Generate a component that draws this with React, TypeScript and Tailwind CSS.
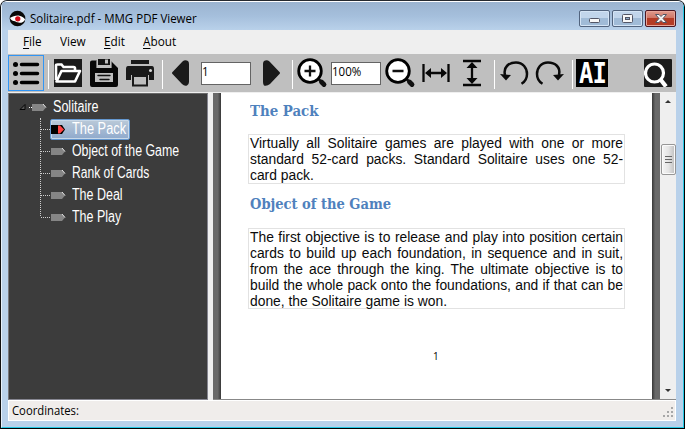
import type { ReactNode } from "react";

const UI = "font-['Open_Sans','Noto_Sans',sans-serif]";

function Glyph({ box, className, children }: { box: string; className: string; children: ReactNode }) {
  return (
    <svg viewBox={box} className={`h-[38px] shrink-0 ${className}`} fill="none" stroke="none">
      {children}
    </svg>
  );
}

function Separator() {
  return <div className="mt-[6px] h-[29px] w-px shrink-0 bg-white" />;
}

function Field({ value }: { value: string }) {
  return (
    <div className="mt-2 h-[23px] w-[50px] shrink-0 border border-[#646464] bg-white text-[12px] leading-[18px] text-black">
      <span className="inline-block origin-left scale-x-[.96]">{value}</span>
    </div>
  );
}

function TitleBar() {
  return (
    <div className="flex h-[28px] shrink-0 bg-linear-to-b from-[#9bb4d0] via-[#a5bfdc] to-[#b9d1ea] pl-[7px]">
      <svg viewBox="0 0 18 18" className="mt-[8px] size-[17px]">
        <circle cx="9" cy="9" r="8.3" fill="#080808" />
        <path d="M1 8.500C4 7 7 5.500 11 6C14.500 6.500 16.500 9 17 10C15.500 14 10 14.500 6.500 12Q3 12 1 8.500Z" fill="#fff" />
        <circle cx="9.300" cy="9.300" r="2.800" fill="#d10b18" />
      </svg>
      <div className="mt-[8px] ml-[4px] w-[200px] text-[12px] leading-[18px] whitespace-nowrap text-black">
        <span className="inline-block origin-left scale-x-[.958]">Solitaire.pdf - MMG PDF Viewer</span>
      </div>
      <div className="mt-[8px] mr-[7px] ml-auto flex gap-[2px]">
        <div className="h-[17px] w-[31px] rounded-[2px] border border-[#52647e] bg-linear-to-b from-[#c1d5eb] from-50% to-[#a0bbd7] to-50% shadow-[inset_0_0_0_1px_#d4e4f5]">
          <svg viewBox="0 0 29 15" className="h-[15px] w-[29px]"><rect x="9.500" y="7.500" width="10" height="4" rx="1" fill="#f8f8f8" stroke="#535666" /></svg>
        </div>
        <div className="h-[17px] w-[31px] rounded-[2px] border border-[#52647e] bg-linear-to-b from-[#c1d5eb] from-50% to-[#a0bbd7] to-50% shadow-[inset_0_0_0_1px_#d4e4f5]">
          <svg viewBox="0 0 29 15" className="h-[15px] w-[29px]"><rect x="9.500" y="3.500" width="10" height="8" rx="1" fill="#f8f8f8" stroke="#535666" /><rect x="12.500" y="6.500" width="4" height="2" fill="#8fabc9" stroke="#535666" /></svg>
        </div>
        <div className="h-[17px] w-[31px] rounded-[2px] border border-[#4b1722] bg-linear-to-b from-[#df9a8d] from-0% via-[#cf7464] via-49% to-[#b43c26] to-50% shadow-[inset_0_0_0_1px_#e8a69a]">
          <svg viewBox="0 0 29 15" className="h-[15px] w-[29px]"><path d="M9.500 3.500H13L15 5.500L17 3.500H20.500L17 7.500L20.500 11.500H17L15 9.500L13 11.500H9.500L13 7.500Z" fill="#f3f3f3" stroke="#525666" /></svg>
        </div>
      </div>
    </div>
  );
}

function MenuItem({ name, plain, width }: { name: string; plain?: boolean; width: string }) {
  return (
    <div className={`${width} shrink-0`}>
      <span className="inline-block origin-left scale-x-[.98]">
        {plain ? name : <><span className="underline underline-offset-2">{name[0]}</span>{name.slice(1)}</>}
      </span>
    </div>
  );
}

function Toolbar() {
  return (
    <div className="flex h-[38px] shrink-0 bg-[#bfbfbf]">
      <div className="mt-[1px] h-[36px] w-9 shrink-0 border border-[#3195f4]">
        <svg viewBox="0 0 34 34" className="size-[34px]">
          <g fill="#000"><circle cx="6.500" cy="8.500" r="2.500" /><circle cx="6.500" cy="17.500" r="2.500" /><circle cx="6.500" cy="26.500" r="2.500" /></g>
          <path d="M12.500 8.500H28.500M12.500 17.500H28.500M12.500 26.500H28.500" stroke="#000" strokeWidth="3.500" strokeLinecap="round" />
        </svg>
      </div>
      <div className="w-1 shrink-0" />
      <Separator />
      <Glyph box="49 54 113 38" className="w-[113px]">
        <rect x="54" y="59" width="28" height="28" fill="#1b1b1b" />
        <path d="M56 80V65.500Q56 64.500 57.500 64.500H61.500L63.500 67H73.500Q75 67 75 68.500V71" stroke="#fff" strokeWidth="2.600" />
        <path d="M61.500 71H80L75 81.500H56.500Z" fill="#1b1b1b" stroke="#fff" strokeWidth="2.600" strokeLinejoin="round" />
        <path d="M92 60.500H97V68H111V61L118 68V85Q118 87 116 87H92Q90 87 90 85V62.500Q90 60.500 92 60.500Z" fill="#080808" />
        <path d="M97 60.500V67.500H111V61" stroke="#bfbfbf" strokeWidth="1.200" />
        <path d="M98 59H110V65H98Z" fill="#141414" /><rect x="105" y="59.500" width="3" height="4" fill="#bfbfbf" />
        <rect x="95" y="73" width="18" height="9" fill="#bfbfbf" />
        <path d="M98 75.500H110M100 79.500H109" stroke="#111" strokeWidth="1.400" strokeLinecap="round" />
        <path d="M131 60H149V64H131ZM128 66H152Q154 66 154 69V80H149V75H131V80H126V69Q126 66 128 66Z" fill="#1a1a1a" />
        <path d="M133 76H147V85.500H133Z" fill="#bfbfbf" stroke="#1a1a1a" strokeWidth="2" />
        <circle cx="150.500" cy="70.500" r="1.500" fill="#d8d8d8" />
      </Glyph>
      <Separator />
      <Glyph box="163 54 38 38" className="w-[38px]">
        <path d="M173 71.500L182.500 61.500Q185 59.500 188 61Q189 62 189 64V82Q189 84 187 85.500Q184.500 86.500 182 84L173 74.500Q171 73 173 71.500Z" fill="#1a1a1a" />
      </Glyph>
      <Field value="1" />
      <Glyph box="251 54 41 38" className="w-[41px]">
        <path d="M279 71.500L269.500 61.500Q267 59.500 264 61Q263 62 263 64V82Q263 84 264 85.500Q267 86.500 270 84L279 74.500Q281 73 279 71.500Z" fill="#1a1a1a" />
      </Glyph>
      <Separator />
      <Glyph box="293 54 38 38" className="w-[38px]">
        <path d="M318 78.500L321 81.500" stroke="#111" strokeWidth="2.500" />
        <path d="M321.500 82L324 84.500" stroke="#111" strokeWidth="4.800" strokeLinecap="round" />
        <circle cx="310" cy="71" r="11.300" fill="#fff" stroke="#000" strokeWidth="2.800" />
        <path d="M304.500 71H315.500M310 65.500V76.500" stroke="#111" strokeWidth="2.300" />
      </Glyph>
      <Field value="100%" />
      <Glyph box="381 54 113 38" className="w-[113px]">
        <path d="M406 78.500L409 81.500" stroke="#111" strokeWidth="2.500" />
        <path d="M409.500 82L412 84.500" stroke="#111" strokeWidth="4.800" strokeLinecap="round" />
        <circle cx="398" cy="71" r="11.300" fill="#fff" stroke="#000" strokeWidth="2.800" />
        <path d="M392.500 71H403.500" stroke="#111" strokeWidth="2.300" />
        <path d="M423.500 64V82M448.500 64V82M428 73H444M463 61H481M463 85H481M472 65V81" stroke="#080808" strokeWidth="2.300" />
        <path d="M425 73L431 68V78ZM447 73L441 68V78ZM472 62L466.500 68H477.500ZM472 84L466.500 78H477.500Z" fill="#080808" />
      </Glyph>
      <Separator />
      <Glyph box="495 54 77 38" className="w-[77px]">
        <path d="M505 75C503 67 509 62.500 516 62.500C523 62.500 527 68 527 74C527 79 524.500 82 521.500 83.800" stroke="#0a0a0a" strokeWidth="2.500" />
        <path d="M500 74L511 75L506 80.500Z" fill="#0a0a0a" />
        <path d="M559 75C561 67 555 62.500 548 62.500C541 62.500 537 68 537 74C537 79 539.500 82 542.500 83.800" stroke="#0a0a0a" strokeWidth="2.500" />
        <path d="M564 74L553 75L558 80.500Z" fill="#0a0a0a" />
      </Glyph>
      <Separator />
      <div className="mt-[5px] ml-[3px] flex h-7 w-8 shrink-0 items-center justify-center bg-black font-['DejaVu_Sans_Mono',monospace] text-[29px] leading-none font-bold text-white">
        <span className="inline-block scale-x-[.82] tracking-[-1px]">AI</span>
      </div>
      <svg viewBox="0 0 28 28" className="mt-[5px] mr-[4px] ml-auto size-7" fill="none">
        <rect width="28" height="28" rx="1" fill="#1b1b1b" />
        <circle cx="10.500" cy="14" r="9" stroke="#fff" strokeWidth="3.200" /><path d="M16.500 20.500L22 27.500" stroke="#fff" strokeWidth="4.200" />
      </svg>
    </div>
  );
}

function TreeIcon({ selected = false }) {
  return (
    <svg viewBox="0 0 15 9" className="h-[9px] w-[15px] shrink-0">
      <path d={selected ? "M0 0H11L14 4.500L11 9H0Z" : "M0 1H11L14 4.500L11 8H0Z"} fill={selected ? "#000" : "#858585"} />
      {selected && <path d="M7 0.500H9L13 4.500L9 8.500H7Z" fill="#ff4545" />}
      {!selected && <path d="M11 1L14 4.500" stroke="#e7e7e7" fill="none" />}
    </svg>
  );
}

function Outline() {
  const sections = [
    { name: "The Pack", squeeze: "scale-x-[.8]" },
    { name: "Object of the Game", squeeze: "scale-x-[.772]" },
    { name: "Rank of Cards", squeeze: "scale-x-[.756]" },
    { name: "The Deal", squeeze: "scale-x-[.78]" },
    { name: "The Play", squeeze: "scale-x-[.78]" },
  ];
  return (
    <div className="w-[200px] shrink-0 border border-l-[#77777c] border-t-[#696969] border-r-[#858590] border-b-[#858590] bg-[#3c3c3c] font-['Liberation_Sans',Arial,sans-serif] text-[16px] leading-[22px] text-white">
      <div className="mt-[2px] flex h-[22px] items-center pl-[10px]">
        <svg viewBox="0 0 8 8" className="size-2"><path d="M1 6.500L6 1.500V6.500Z" fill="#555" stroke="#050505" /></svg>
        <div className="ml-[2px] w-[3px] border-t border-dotted border-white" />
        <TreeIcon />
        <span className="ml-[6px] origin-left scale-x-[.785]">Solitaire</span>
      </div>
      <div className="ml-[31px] border-l border-dotted border-[#cecece]">
        {sections.map(({ name, squeeze }, i) => (
          <div key={name} className={`flex h-[22px] items-center ${i === 4 ? "relative" : ""}`}>
            {i === 4 && <div className="absolute top-[11px] -left-px h-[11px] w-px bg-[#3c3c3c]" />}
            <div className="w-[9px] shrink-0 border-t border-dotted border-[#cecece]" />
            <div className={i === 0 ? "flex h-[21px] w-[80px] shrink-0 items-center rounded-[2px] border border-[#6497cf] bg-linear-to-b from-[#bbcad8] to-[#8fa9cc] shadow-[inset_0_0_0_1px_#c8d8e8]" : "flex h-[21px] items-center pl-px"}>
              <TreeIcon selected={i === 0} />
              <span className={`ml-[6px] shrink-0 origin-left whitespace-nowrap ${squeeze}`}>{name}</span>
            </div>
          </div>
        ))}
      </div>
    </div>
  );
}

function Paragraph({ lines, className }: { lines: string[]; className: string }) {
  return (
    <div className={`ml-[27px] w-[377px] border border-[#e2e2e2] px-px font-['Liberation_Sans',Arial,sans-serif] text-[13.85px] leading-4 text-[#0b0b0b] ${className}`}>
      {lines.map((line, i) => (
        <div key={line} className={`whitespace-nowrap ${i === lines.length - 1 ? "" : "[text-align-last:justify]"}`}>{line}</div>
      ))}
    </div>
  );
}

function Page() {
  const heading = "ml-[29px] font-['DejaVu_Serif_Condensed','DejaVu_Serif',serif] text-[15px] font-bold text-[#4f81bd] whitespace-nowrap";
  return (
    <div className="flex min-w-0 flex-1 border-b border-[#888] bg-white">
      <div className="w-2 shrink-0 bg-linear-to-r from-[#696969] from-60% to-[#373737]" />
      <div className="min-w-0 flex-1 overflow-hidden">
        <div className={`${heading} mt-[8px] h-5 leading-5`}><span className="inline-block origin-left scale-x-[.99]">The Pack</span></div>
        <Paragraph className="mt-[13px] h-[50px]" lines={["Virtually all Solitaire games are played with one or more", "standard 52-card packs. Standard Solitaire uses one 52-", "card pack."]} />
        <div className={`${heading} mt-[10px] h-5 leading-5`}><span className="inline-block origin-left scale-x-[.968]">Object of the Game</span></div>
        <Paragraph className="mt-[14px] h-[81px]" lines={["The first objective is to release and play into position certain", "cards to build up each foundation, in sequence and in suit,", "from the ace through the king. The ultimate objective is to", "build the whole pack onto the foundations, and if that can be", "done, the Solitaire game is won."]} />
        <div className="mt-[39px] ml-[212px] text-[10px] leading-4 text-black">1</div>
      </div>
      <div className="w-2 shrink-0 bg-linear-to-r from-[#373737] to-[#696969] to-40%" />
      <div className="flex w-[16px] shrink-0 flex-col items-center bg-[#efefef]">
        <svg viewBox="0 0 8 5" className="mt-[6px] h-[5px] w-2"><path d="M1 4L4 1L7 4Z" fill="#333" /></svg>
        <div className="mt-[40px] flex h-[31px] w-[15px] flex-col items-center justify-center gap-[2px] rounded-[2px] border border-[#969696] bg-linear-to-r from-[#f5f5f5] via-[#e4e4e4] to-[#bfbfbf] shadow-[inset_0_0_0_1px_#fafafa]">
          <div className="h-px w-[7px] bg-[#666]" /><div className="h-px w-[7px] bg-[#666]" /><div className="h-px w-[7px] bg-[#666]" />
        </div>
        <svg viewBox="0 0 8 5" className="mt-auto mb-[6px] h-[5px] w-2"><path d="M1 1L4 4L7 1Z" fill="#333" /></svg>
      </div>
    </div>
  );
}

export default function App() {
  return (
    <div className={`h-[429px] w-[685px] overflow-hidden rounded-t-[7px] border border-r-black border-b-black border-l-[#101010] border-t-[#25292f] bg-[#b9d1ea] ${UI}`}>
      <div className="flex h-[427px] flex-col rounded-t-[6px] border border-t-white border-r-[#25c8e4] border-b-[#25c8e4] border-l-[#e7f1fb] bg-[#b9d1ea]">
        <TitleBar />
        <div className="mx-[6px] flex h-[391px] w-[668px] flex-col bg-[#efefef]">
          <div className="flex h-[24px] shrink-0 pl-[15px] text-[12px] leading-[23px] text-black">
            <MenuItem name="File" width="w-[37px]" /><MenuItem name="View" plain width="w-[44px]" /><MenuItem name="Edit" width="w-[39px]" /><MenuItem name="About" width="w-[50px]" />
          </div>
          <Toolbar />
          <div className="h-px shrink-0 bg-[#efefef]" />
          <div className="flex h-[307px] shrink-0">
            <Outline />
            <div className="w-[5px] shrink-0 bg-[#efefef]" />
            <Page />
          </div>
          <div className="flex h-[21px] shrink-0 border border-white bg-[#f0edeb] pl-[3px] text-[12px] leading-[20px] text-black">
            <span className="origin-left scale-x-[.94]">Coordinates:</span>
            <svg viewBox="0 0 12 12" className="mt-[6px] mr-px ml-auto size-3" fill="#a7a7a7">
              <rect x="9" width="2" height="2" /><rect x="5" y="4" width="2" height="2" /><rect x="9" y="4" width="2" height="2" /><rect x="1" y="8" width="2" height="2" /><rect x="5" y="8" width="2" height="2" /><rect x="9" y="8" width="2" height="2" />
            </svg>
          </div>
        </div>
      </div>
    </div>
  );
}
